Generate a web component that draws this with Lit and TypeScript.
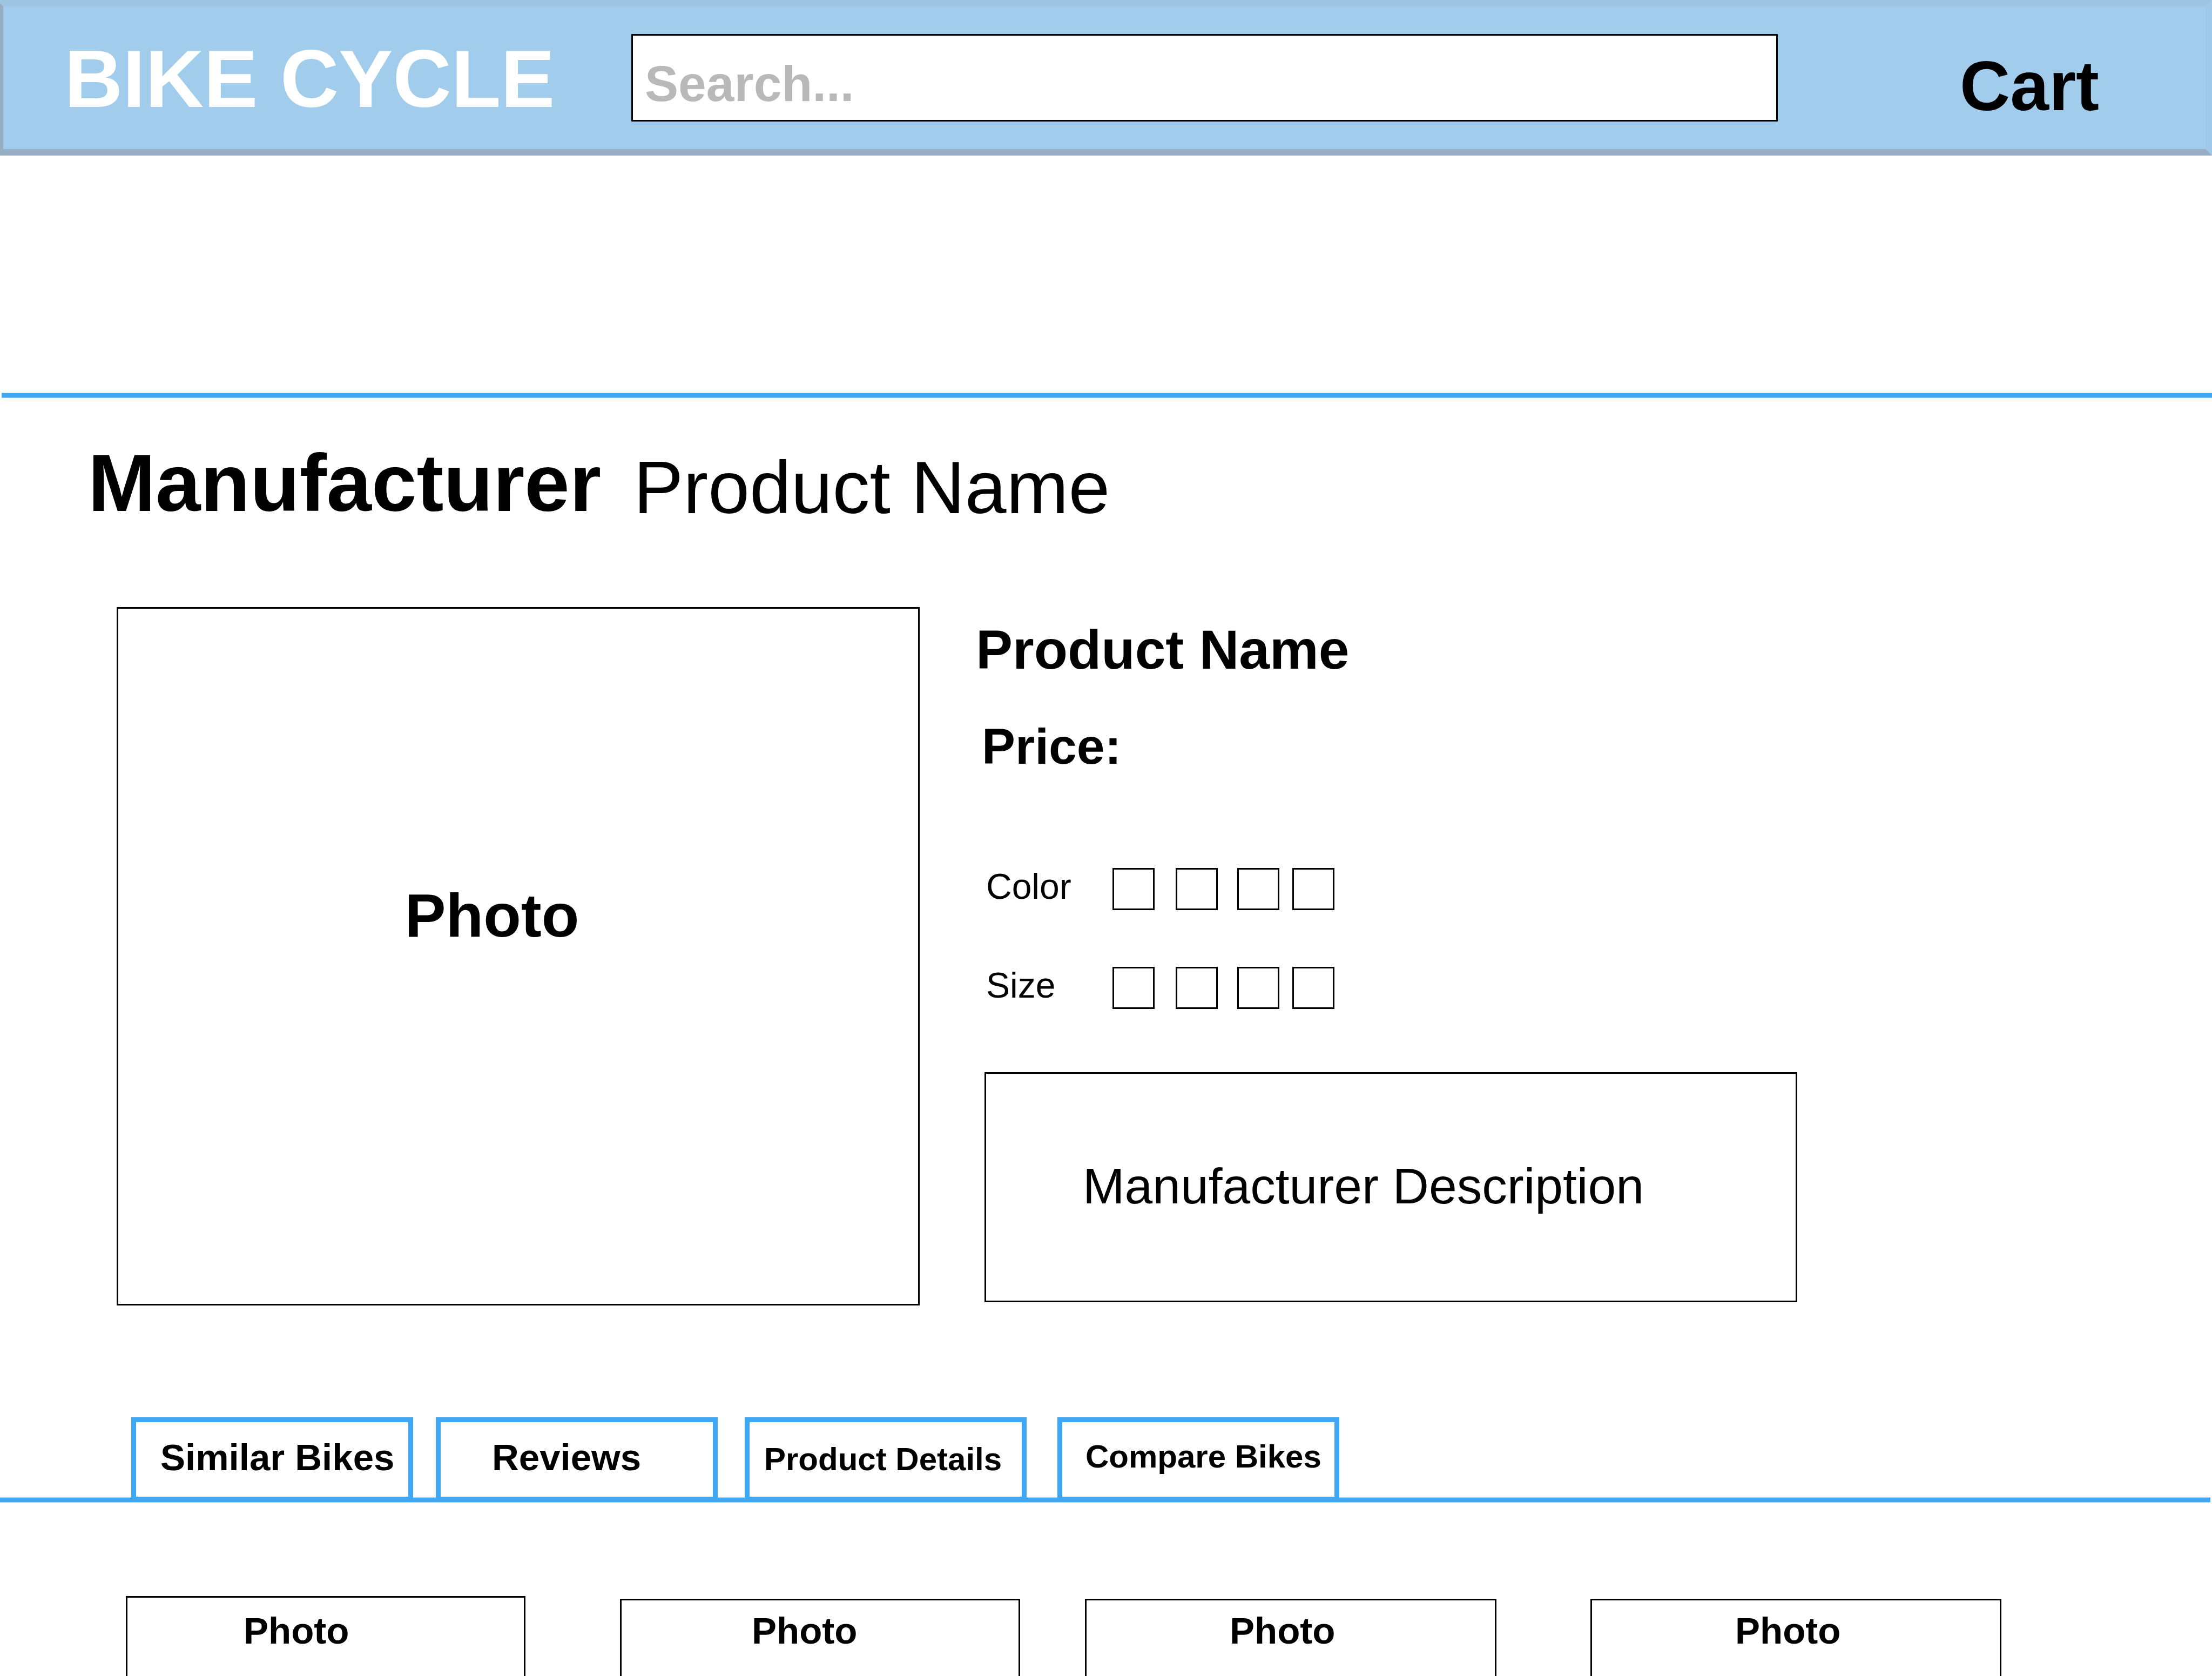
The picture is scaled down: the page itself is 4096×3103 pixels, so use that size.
import { LitElement, html, css } from "lit";
import { customElement, state } from "lit/decorators.js";

interface Tab {
  label: string;
  kind: string;
}

const TABS: Tab[] = [
  { label: "Similar Bikes", kind: "similar" },
  { label: "Reviews", kind: "reviews" },
  { label: "Product Details", kind: "details" },
  { label: "Compare Bikes", kind: "compare" },
];

const OPTIONS = ["Color", "Size"];
const CARDS = ["one", "two", "three", "four"];

@customElement("app-root")
export class AppRoot extends LitElement {
  @state() private activeTab = 0;

  static styles = css`
    :host {
      display: flex;
      flex-direction: column;
      min-height: 100vh;
      overflow: hidden;
      background: #fff;
      color: #000;
      font-family: "Liberation Sans", Arial, sans-serif;
    }
    *,
    *::before {
      box-sizing: border-box;
    }
    h1,
    h2,
    p {
      margin: 0;
    }
    button,
    input {
      margin: 0;
      border-radius: 0;
      font-family: inherit;
      color: inherit;
    }

    /* Header */
    .header {
      display: grid;
      grid-template-columns: 1050px 1fr 792px;
      align-items: center;
      height: 288px;
      margin-left: -6px;
      padding-left: 113px;
      border: 12px solid;
      border-color: #9dc4e1 #9fc8e9 #96afc4 #97adc3;
      background: #a1cceb;
    }
    .brand {
      padding-top: 4px;
      color: #fff;
      font-size: 150px;
      line-height: 172px;
      font-weight: bold;
      text-decoration: none;
      white-space: nowrap;
    }
    .search {
      width: 100%;
      height: 162px;
      padding: 23px 22px 0;
      border: 3px solid #000;
      background: #fff;
      font-size: 93px;
      font-weight: bold;
      outline: none;
    }
    .search::placeholder {
      color: #b9b9b9;
      opacity: 1;
    }
    .cart {
      padding: 30px 0 0 337px;
      color: #000;
      font-size: 129px;
      line-height: 150px;
      font-weight: bold;
      text-decoration: none;
    }

    .rule {
      flex: none;
      height: 10px;
      border: solid #a3d4fa;
      border-width: 1px 0;
      background: #40a7f5;
    }
    .rule-top {
      margin: 439px 0 0 3px;
    }
    .rule-tabs {
      margin-right: 3px;
    }

    /* Title */
    .title {
      display: flex;
      gap: 60px;
      padding: 71px 163px 0;
      white-space: nowrap;
    }
    .maker {
      font-size: 150px;
      line-height: 172px;
    }
    .model {
      padding-top: 8px;
      font-size: 138px;
      line-height: 172px;
    }

    /* Product */
    .product {
      display: grid;
      grid-template-columns: 1487fr 1521fr;
      gap: 104px;
      padding: 136px 768px 0 216px;
    }
    .photo {
      display: flex;
      align-items: center;
      justify-content: center;
      min-height: 1293px;
      padding: 0 97px 152px 0;
      border: 3px solid #000;
      font-size: 114px;
      font-weight: bold;
    }
    .info {
      display: flex;
      flex-direction: column;
      padding-top: 21px;
    }
    .name {
      font-size: 102px;
      line-height: 116px;
    }
    .price {
      padding: 67px 0 66px 11px;
      font-size: 93px;
      line-height: 108px;
      font-weight: bold;
    }
    .option {
      display: grid;
      grid-template-columns: 236px 1fr;
      margin-top: 105px;
      padding-left: 17px;
    }
    .option-label {
      padding-left: 2px;
      font-size: 66px;
      line-height: 68px;
    }
    .choices {
      display: flex;
    }
    .choice {
      appearance: none;
      flex: none;
      width: 78px;
      height: 78px;
      border: 3px solid #000;
      background: #fff;
    }
    .choice:checked {
      background: #a1cceb;
    }
    .choice-2 {
      margin-left: 39px;
    }
    .choice-3 {
      margin-left: 36px;
    }
    .choice-4 {
      margin-left: 24px;
    }
    .description {
      display: flex;
      align-items: center;
      justify-content: center;
      height: 426px;
      margin: 117px 0 0 16px;
      padding: 0 102px 4px 0;
      border: 3px solid #000;
      font-size: 93px;
      white-space: nowrap;
    }

    /* Tabs */
    .tabs {
      display: flex;
      position: relative;
      margin: 207px 0 -8px;
      padding-left: 243px;
    }
    .tab {
      flex: 0 1 522px;
      height: 156px;
      border: 9px solid #40a7f5;
      background: #fff;
      font-size: 69px;
      font-weight: bold;
      text-align: left;
      white-space: nowrap;
    }
    .similar {
      padding: 0 0 8px 45px;
    }
    .reviews {
      margin-left: 42px;
      padding: 0 0 8px 95px;
    }
    .details {
      margin-left: 50px;
      padding: 0 0 2px 27px;
      font-size: 60px;
    }
    .compare {
      margin-left: 57px;
      padding: 0 0 12px 43px;
      font-size: 60px;
    }

    /* Cards */
    .cards {
      display: grid;
      flex: 1;
      grid-template-columns: 740fr 175fr 741fr 120fr 762fr 174fr 761fr;
      padding: 173px 390px 0 233px;
    }
    .card {
      min-height: 143px;
      margin-top: 5px;
      padding-top: 17px;
      border: 3px solid #000;
      border-bottom: 0;
      font-size: 69px;
      line-height: 80px;
      font-weight: bold;
    }
    .one {
      grid-column: 1;
      margin-top: 0;
      padding: 22px 0 0 215px;
    }
    .two {
      grid-column: 3;
      padding-left: 241px;
    }
    .three {
      grid-column: 5;
      padding-left: 265px;
    }
    .four {
      grid-column: 7;
      padding-left: 265px;
    }
  `;

  private renderOption(name: string) {
    const id = `${name.toLowerCase()}-label`;
    return html`
      <div class="option" role="radiogroup" aria-labelledby=${id}>
        <span class="option-label" id=${id}>${name}</span>
        <div class="choices">
          ${[1, 2, 3, 4].map(
            (n) => html`<input
              class="choice choice-${n}"
              type="radio"
              name=${name}
              aria-label="${name} ${n}"
            />`
          )}
        </div>
      </div>
    `;
  }

  render() {
    return html`
      <header class="header">
        <a class="brand" href="#">BIKE CYCLE</a>
        <input class="search" type="text" placeholder="Search..." aria-label="Search" />
        <a class="cart" href="#cart">Cart</a>
      </header>

      <div class="rule rule-top"></div>

      <div class="title">
        <h1 class="maker">Manufacturer</h1>
        <p class="model">Product Name</p>
      </div>

      <section class="product">
        <div class="photo">Photo</div>
        <div class="info">
          <h2 class="name">Product Name</h2>
          <p class="price">Price:</p>
          ${OPTIONS.map((name) => this.renderOption(name))}
          <div class="description">Manufacturer Description</div>
        </div>
      </section>

      <div class="tabs" role="tablist">
        ${TABS.map(
          (tab, i) => html`<button
            class="tab ${tab.kind}"
            type="button"
            role="tab"
            aria-selected=${i === this.activeTab ? "true" : "false"}
            @click=${() => (this.activeTab = i)}
          >${tab.label}</button>`
        )}
      </div>
      <div class="rule rule-tabs"></div>

      <section class="cards">
        ${CARDS.map((card) => html`<article class="card ${card}">Photo</article>`)}
      </section>
    `;
  }
}
